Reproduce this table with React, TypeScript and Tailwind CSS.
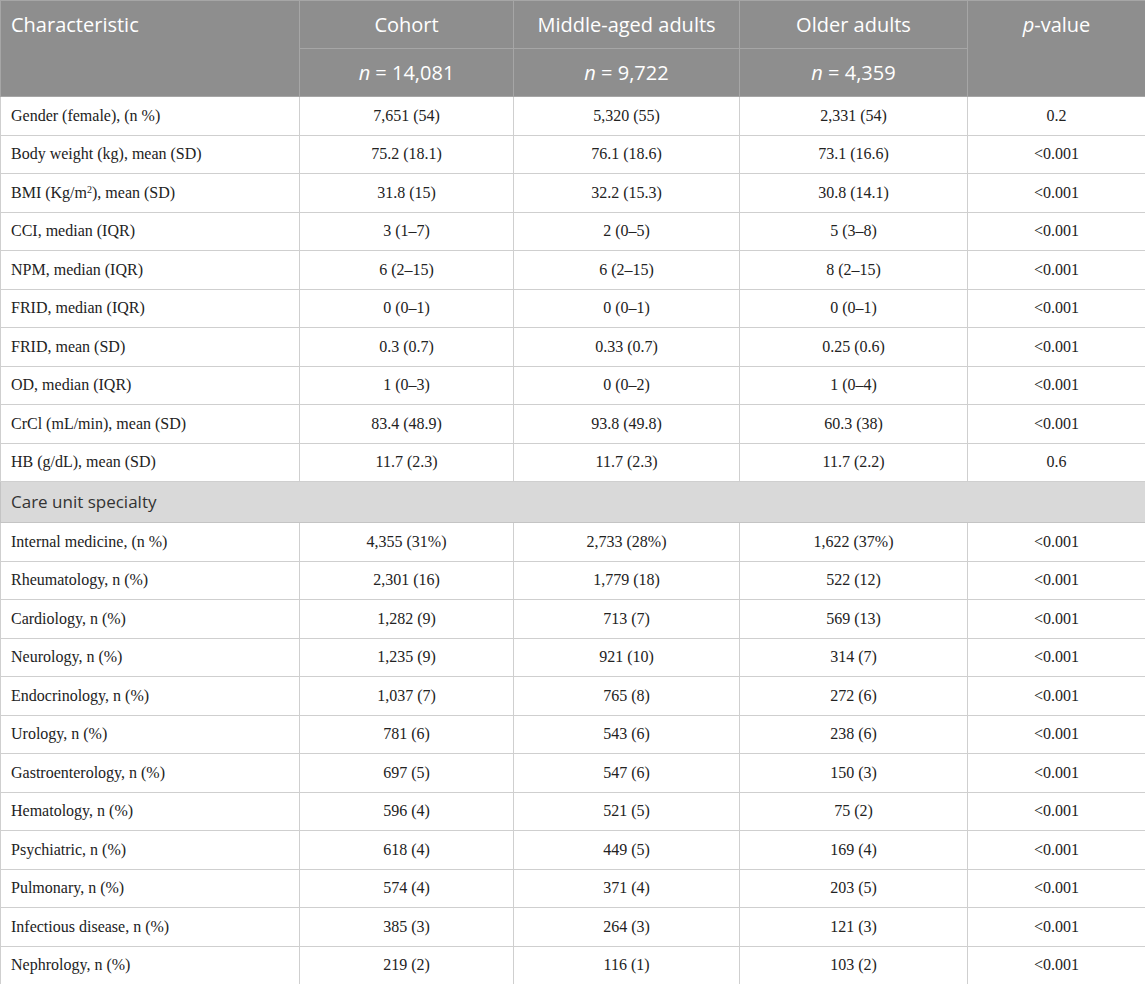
type Row = [string | JSX.Element, string, string, string, string];

const general: Row[] = [
  ["Gender (female), (n %)", "7,651 (54)", "5,320 (55)", "2,331 (54)", "0.2"],
  ["Body weight (kg), mean (SD)", "75.2 (18.1)", "76.1 (18.6)", "73.1 (16.6)", "<0.001"],
  [
    <>
      BMI (Kg/m<sup className="text-[10px]">2</sup>), mean (SD)
    </>,
    "31.8 (15)",
    "32.2 (15.3)",
    "30.8 (14.1)",
    "<0.001",
  ],
  ["CCI, median (IQR)", "3 (1–7)", "2 (0–5)", "5 (3–8)", "<0.001"],
  ["NPM, median (IQR)", "6 (2–15)", "6 (2–15)", "8 (2–15)", "<0.001"],
  ["FRID, median (IQR)", "0 (0–1)", "0 (0–1)", "0 (0–1)", "<0.001"],
  ["FRID, mean (SD)", "0.3 (0.7)", "0.33 (0.7)", "0.25 (0.6)", "<0.001"],
  ["OD, median (IQR)", "1 (0–3)", "0 (0–2)", "1 (0–4)", "<0.001"],
  ["CrCl (mL/min), mean (SD)", "83.4 (48.9)", "93.8 (49.8)", "60.3 (38)", "<0.001"],
  ["HB (g/dL), mean (SD)", "11.7 (2.3)", "11.7 (2.3)", "11.7 (2.2)", "0.6"],
];

const units: Row[] = [
  ["Internal medicine, (n %)", "4,355 (31%)", "2,733 (28%)", "1,622 (37%)", "<0.001"],
  ["Rheumatology, n (%)", "2,301 (16)", "1,779 (18)", "522 (12)", "<0.001"],
  ["Cardiology, n (%)", "1,282 (9)", "713 (7)", "569 (13)", "<0.001"],
  ["Neurology, n (%)", "1,235 (9)", "921 (10)", "314 (7)", "<0.001"],
  ["Endocrinology, n (%)", "1,037 (7)", "765 (8)", "272 (6)", "<0.001"],
  ["Urology, n (%)", "781 (6)", "543 (6)", "238 (6)", "<0.001"],
  ["Gastroenterology, n (%)", "697 (5)", "547 (6)", "150 (3)", "<0.001"],
  ["Hematology, n (%)", "596 (4)", "521 (5)", "75 (2)", "<0.001"],
  ["Psychiatric, n (%)", "618 (4)", "449 (5)", "169 (4)", "<0.001"],
  ["Pulmonary, n (%)", "574 (4)", "371 (4)", "203 (5)", "<0.001"],
  ["Infectious disease, n (%)", "385 (3)", "264 (3)", "121 (3)", "<0.001"],
  ["Nephrology, n (%)", "219 (2)", "116 (1)", "103 (2)", "<0.001"],
];

const headCell = "border border-[#a6a6a6] font-normal text-white text-[20px] h-[48px] align-middle";

function BodyRow({ row }: { row: Row }) {
  return (
    <tr className="h-[38.5px]">
      <td className="border border-[#cfcfcf] px-[10px] text-left">{row[0]}</td>
      {row.slice(1).map((v, i) => (
        <td key={i} className="border border-[#cfcfcf] px-[10px] text-center">
          {v}
        </td>
      ))}
    </tr>
  );
}

export default function App() {
  return (
    <div className="w-[1145px] bg-white">
      <table
        className="w-[1145px] table-fixed border-collapse text-[16px] text-[#222]"
        style={{ fontFamily: '"Liberation Serif", serif' }}
      >
        <colgroup>
          <col className="w-[299px]" />
          <col className="w-[214px]" />
          <col className="w-[226px]" />
          <col className="w-[228px]" />
          <col className="w-[178px]" />
        </colgroup>
        <thead className="bg-[#8e8e8e] font-['Open_Sans',sans-serif]">
          <tr>
            <th rowSpan={2} className={`${headCell} !align-top pt-[9px] px-[10px] text-left`}>
              Characteristic
            </th>
            <th className={`${headCell} text-center`}>Cohort</th>
            <th className={`${headCell} text-center`}>Middle-aged adults</th>
            <th className={`${headCell} text-center`}>Older adults</th>
            <th rowSpan={2} className={`${headCell} !align-top pt-[9px] text-center`}>
              <i>p</i>-value
            </th>
          </tr>
          <tr>
            <th className={`${headCell} text-center`}>
              <i>n</i> = 14,081
            </th>
            <th className={`${headCell} text-center`}>
              <i>n</i> = 9,722
            </th>
            <th className={`${headCell} text-center`}>
              <i>n</i> = 4,359
            </th>
          </tr>
        </thead>
        <tbody>
          {general.map((r, i) => (
            <BodyRow key={i} row={r} />
          ))}
          <tr className="h-[41px] bg-[#d9d9d9]">
            <td
              colSpan={5}
              className="border border-[#c4c4c4] px-[10px] text-left text-[17px] text-[#333] font-['Open_Sans',sans-serif]"
            >
              Care unit specialty
            </td>
          </tr>
          {units.map((r, i) => (
            <BodyRow key={i} row={r} />
          ))}
        </tbody>
      </table>
    </div>
  );
}
